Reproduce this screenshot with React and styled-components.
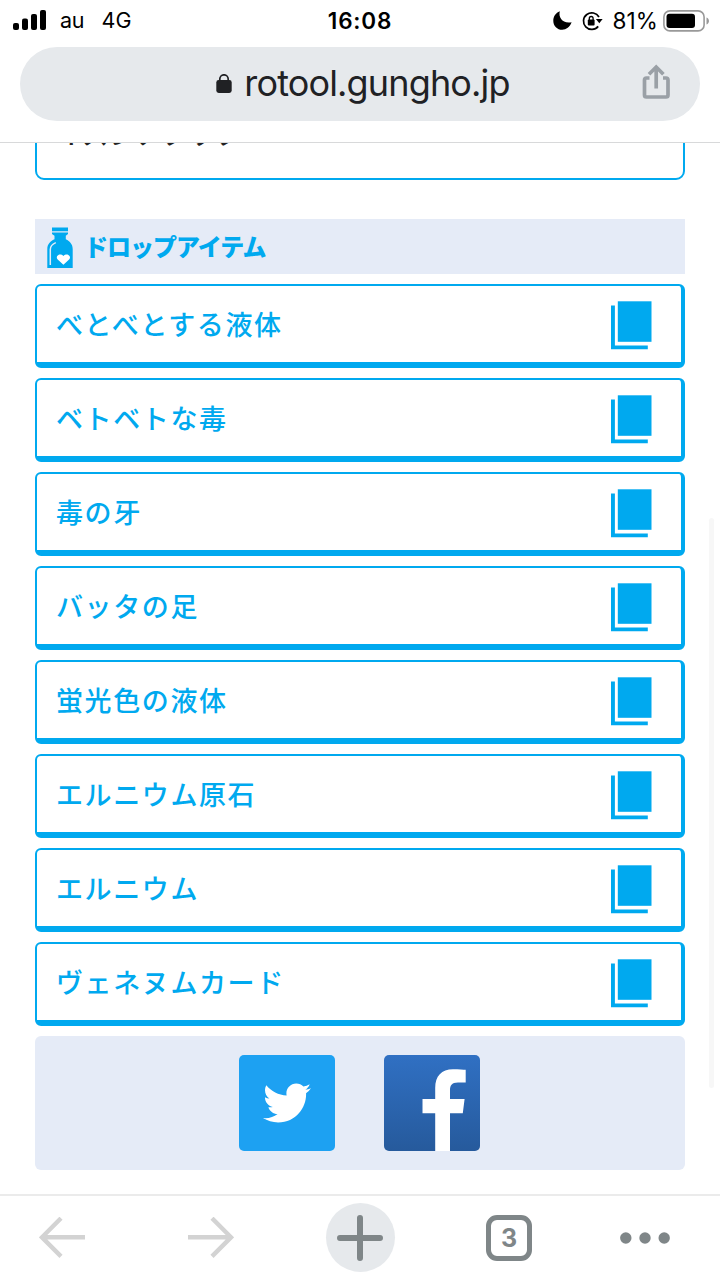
import React from "react";
import styled, { createGlobalStyle } from "styled-components";
import { FaTwitter } from "react-icons/fa";

const GlobalStyle = createGlobalStyle`
  * {
    box-sizing: border-box;
  }
  body {
    margin: 0;
    background: #fff;
  }
`;

const Screen = styled.div`
  display: flex;
  flex-direction: column;
  width: 720px;
  height: 1280px;
  overflow: hidden;
  background: #fff;
  font-family: Inter, "Noto Sans CJK JP", sans-serif;
`;

const StatusBar = styled.div`
  display: grid;
  grid-template-columns: 1fr auto 1fr;
  align-items: center;
  height: 40px;
  padding: 0 10px 0 13px;
  flex-shrink: 0;
  color: #000;
  font-size: 21.5px;
  line-height: 41px;
`;

const StatusGroup = styled.div`
  display: flex;
  align-items: center;
  justify-content: ${({ $end }) => ($end ? "flex-end" : "flex-start")};
`;

const Carrier = styled.span`
  margin-left: 14px;
  letter-spacing: -0.2px;
`;

const Network = styled.span`
  margin-left: 17px;
  letter-spacing: 0.3px;
`;

const Clock = styled.span`
  margin-right: 3px;
  font-size: 22.5px;
  font-weight: 600;
  letter-spacing: 0.8px;
`;

const Percent = styled.span`
  margin: 0 5px 0 10px;
  font-size: 22.5px;
  letter-spacing: 0.1px;
`;

const AddressArea = styled.div`
  height: 103px;
  padding: 7px 20px 0;
  flex-shrink: 0;
  border-bottom: 1px solid #d8d9da;
`;

const AddressBar = styled.div`
  display: grid;
  grid-template-columns: 80px 1fr 80px;
  align-items: center;
  height: 74px;
  padding-left: 6px;
  border-radius: 37px;
  background: #e6e9ec;
`;

const Url = styled.div`
  display: flex;
  grid-column: 2;
  align-items: center;
  justify-content: center;
  gap: 12px;
  color: #202124;
  font-size: 36px;
  line-height: 70px;
  letter-spacing: -0.85px;
  white-space: nowrap;
`;

const UrlText = styled.span`
  padding-bottom: 3px;
`;

const ShareButton = styled.div`
  display: flex;
  padding: 0 0 5px 21px;
`;

const Content = styled.main`
  position: relative;
  flex: 1;
  min-height: 0;
  padding: 0 35px;
  overflow: hidden;
`;

const SkillBox = styled.div`
  height: 83px;
  margin-top: -46px;
  padding-left: 20px;
  border: 2px solid #00a9ef;
  border-radius: 9px;
  color: #222;
  font-size: 26px;
  font-weight: 500;
  line-height: 72px;
  letter-spacing: 0.6px;
`;

const SectionTitle = styled.h2`
  display: flex;
  align-items: center;
  gap: 11px;
  height: 55px;
  margin: 39px 0 10px;
  padding: 2px 0 0 12px;
  background: #e5ebf7;
  color: #00a9ef;
  font-size: 24px;
  font-weight: 900;
  line-height: 52px;
  letter-spacing: -1px;
`;

const ItemList = styled.div`
  display: flex;
  flex-direction: column;
  gap: 10px;
`;

const Item = styled.div`
  display: flex;
  align-items: center;
  justify-content: space-between;
  height: 84px;
  padding: 2px 29px 0 19px;
  border: 2px solid #00a9ef;
  border-right-width: 4px;
  border-bottom-width: 6px;
  border-radius: 6px;
  color: #00a9ef;
  font-size: 27px;
  font-weight: 500;
  letter-spacing: 1.6px;
`;

const ItemName = styled.span`
  padding-top: 2px;
  line-height: 70px;
`;

const ShareBox = styled.div`
  display: flex;
  justify-content: center;
  gap: 49px;
  height: 134px;
  margin-top: 10px;
  padding: 19px 1px 0 0;
  border-radius: 6px;
  background: #e5ebf7;
`;

const SocialTile = styled.div`
  display: flex;
  align-items: center;
  justify-content: center;
  width: 96px;
  height: 96px;
  border-radius: 5px;
  overflow: hidden;
  background: ${({ $bg }) => $bg};
  color: #fff;
`;

const ScrollThumb = styled.div`
  position: absolute;
  top: 375px;
  right: 6px;
  width: 5px;
  height: 570px;
  border-radius: 3px;
  background: #f7f7f7;
`;

const Toolbar = styled.nav`
  display: grid;
  grid-template-columns: 124px 173px 126px 172px 100px;
  align-items: center;
  justify-items: center;
  height: 86px;
  padding-bottom: 1px;
  flex-shrink: 0;
  border-top: 2px solid #ebebeb;
`;

const NewTab = styled.div`
  display: flex;
  align-items: center;
  justify-content: center;
  width: 69px;
  height: 69px;
  border-radius: 50%;
  background: #e6e9ec;
`;

const TabCount = styled.div`
  width: 46px;
  height: 46px;
  border: 5px solid #7f8688;
  border-radius: 11px;
  color: #7f8688;
  font-size: 25px;
  font-weight: 700;
  line-height: 37px;
  text-align: center;
`;

const items = [
  "べとべとする液体",
  "ベトベトな毒",
  "毒の牙",
  "バッタの足",
  "蛍光色の液体",
  "エルニウム原石",
  "エルニウム",
  "ヴェネヌムカード",
];

const SignalIcon = () => (
  <svg width="33" height="21" viewBox="0 0 33 21">
    <rect x="0" y="13" width="6" height="7" rx="2" />
    <rect x="9" y="8.5" width="6" height="11.5" rx="2" />
    <rect x="18" y="4" width="6" height="16" rx="2" />
    <rect x="27" y="0" width="6" height="20" rx="2" />
  </svg>
);

const MoonIcon = () => (
  <svg width="19" height="19" viewBox="0 0 19 19">
    <path d="M6.8 0.3C5.2 6.8 9.8 13 18.6 11.3C16.8 16 13.3 18.7 9.2 18.7C4.3 18.7 0.3 14.9 0.3 9.9C0.3 5.5 2.7 2 6.8 0.3Z" />
  </svg>
);

const RotationLockIcon = styled(({ className }) => (
  <svg className={className} width="21" height="20" viewBox="0 0 21 20">
    <path
      d="M17 6A8.3 8.3 0 1 0 16.2 15.4"
      fill="none"
      stroke="#000"
      strokeWidth="1.7"
    />
    <path d="M13.9 8H20.6L17.3 12.3Z" />
    <rect x="5.8" y="8.6" width="6.8" height="5.8" rx="1" />
    <path
      d="M7.3 9V7.4a1.9 1.9 0 0 1 3.8 0V9"
      fill="none"
      stroke="#000"
      strokeWidth="1.3"
    />
  </svg>
))`
  margin-left: 10px;
`;

const BatteryIcon = () => (
  <svg width="47" height="22" viewBox="0 0 47 22">
    <rect
      x="0.9"
      y="0.9"
      width="40.2"
      height="20"
      rx="6"
      fill="none"
      stroke="#999"
      strokeWidth="1.6"
    />
    <rect x="3.5" y="3.8" width="28.5" height="14.2" rx="3" />
    <path d="M43.5 7.5C46.8 8.8 46.8 13.2 43.5 14.5Z" fill="#999" />
  </svg>
);

const LockIcon = () => (
  <svg width="16" height="20" viewBox="0 0 16 20">
    <rect x="0.3" y="6" width="15.4" height="13" rx="2.4" fill="#202124" />
    <path
      d="M3.8 7V5a4.2 4.2 0 0 1 8.4 0V7"
      fill="none"
      stroke="#202124"
      strokeWidth="1.7"
    />
  </svg>
);

const ShareIcon = () => (
  <svg
    width="30"
    height="36"
    viewBox="0 0 30 36"
    fill="none"
    stroke="#9aa0a6"
    strokeWidth="3.7"
  >
    <path d="M8.5 14H5.5Q3.5 14 3.5 16V31Q3.5 33 5.5 33H25Q27 33 27 31V16Q27 14 25 14H22" />
    <path d="M15.2 24.5V3.5M8 10.2L15.2 3L22.4 10.2" />
  </svg>
);

const BottleIcon = () => (
  <svg width="26" height="42" viewBox="0 0 26 42">
    <path
      d="M5 0.5H21V4.3H5ZM5 5.6H21V7L18.8 8.8V12.2C23 14 25.7 17.5 25.7 22V41H0.3V22C0.3 17.5 3 14 7.5 12.2V8.8L5 7Z"
      fill="#00a9ef"
    />
    <path
      d="M3.3 38V22.5C3.3 19.5 5 17.2 8.8 15.6"
      fill="none"
      stroke="#e5ebf7"
      strokeWidth="1.5"
    />
    <path
      d="M16.4 37.8L10.7 32.6C7.7 29.2 12.8 25.1 16.4 29C20 25.1 25.1 29.2 22.1 32.6Z"
      fill="#fff"
    />
  </svg>
);

const CopyIcon = () => (
  <svg width="42" height="50" viewBox="0 0 42 50" fill="#00a9ef">
    <rect x="7.8" y="1.3" width="33.7" height="40.5" />
    <path d="M1 5.5H4.9V45.4H37.8V49.3H1Z" />
  </svg>
);

const FacebookIcon = () => (
  <svg width="96" height="96" viewBox="0 0 96 96">
    <path
      d="M51.2 96V58.3H38.5V44H51.2V33C51.2 21 57.5 14.2 69 14.2C75 14.2 79.5 14.5 81.7 14.8V27.6H74C67.5 27.6 66 30.8 66 35.5V44H80.6L78.8 58.3H66V96Z"
      fill="#fff"
    />
  </svg>
);

const ArrowIcon = ({ right }) => (
  <svg
    width="46"
    height="42"
    viewBox="0 0 46 42"
    fill="none"
    stroke="#d3d3d3"
    strokeWidth="4.4"
  >
    <path
      d={
        right
          ? "M0 20.3H42M24 1.2L43 20.3L24 39.4"
          : "M46 20.3H4M22 1.2L3 20.3L22 39.4"
      }
    />
  </svg>
);

const PlusIcon = () => (
  <svg width="46" height="46" viewBox="0 0 46 46">
    <path
      d="M23 3V43M3 23H43"
      stroke="#7f8688"
      strokeWidth="6"
      strokeLinecap="round"
    />
  </svg>
);

const MoreIcon = () => (
  <svg width="50" height="12" viewBox="0 0 50 12" fill="#7f8688">
    <circle cx="5.8" cy="6" r="5.7" />
    <circle cx="25" cy="6" r="5.7" />
    <circle cx="44.2" cy="6" r="5.7" />
  </svg>
);

const App = () => {
  return (
    <Screen>
      <GlobalStyle />
      <StatusBar>
        <StatusGroup>
          <SignalIcon />
          <Carrier>au</Carrier>
          <Network>4G</Network>
        </StatusGroup>
        <Clock>16:08</Clock>
        <StatusGroup $end>
          <MoonIcon />
          <RotationLockIcon />
          <Percent>81%</Percent>
          <BatteryIcon />
        </StatusGroup>
      </StatusBar>
      <AddressArea>
        <AddressBar>
          <Url>
            <LockIcon />
            <UrlText>rotool.gungho.jp</UrlText>
          </Url>
          <ShareButton>
            <ShareIcon />
          </ShareButton>
        </AddressBar>
      </AddressArea>
      <Content>
        <SkillBox>イズンアタック</SkillBox>
        <SectionTitle>
          <BottleIcon />
          <span>ドロップアイテム</span>
        </SectionTitle>
        <ItemList>
          {items.map((name) => (
            <Item key={name}>
              <ItemName>{name}</ItemName>
              <CopyIcon />
            </Item>
          ))}
        </ItemList>
        <ShareBox>
          <SocialTile $bg="#1da1f2">
            <FaTwitter size={48} />
          </SocialTile>
          <SocialTile $bg="linear-gradient(#3070c3, #265a9c)">
            <FacebookIcon />
          </SocialTile>
        </ShareBox>
        <ScrollThumb />
      </Content>
      <Toolbar>
        <ArrowIcon />
        <ArrowIcon right />
        <NewTab>
          <PlusIcon />
        </NewTab>
        <TabCount>3</TabCount>
        <MoreIcon />
      </Toolbar>
    </Screen>
  );
};

export default App;
